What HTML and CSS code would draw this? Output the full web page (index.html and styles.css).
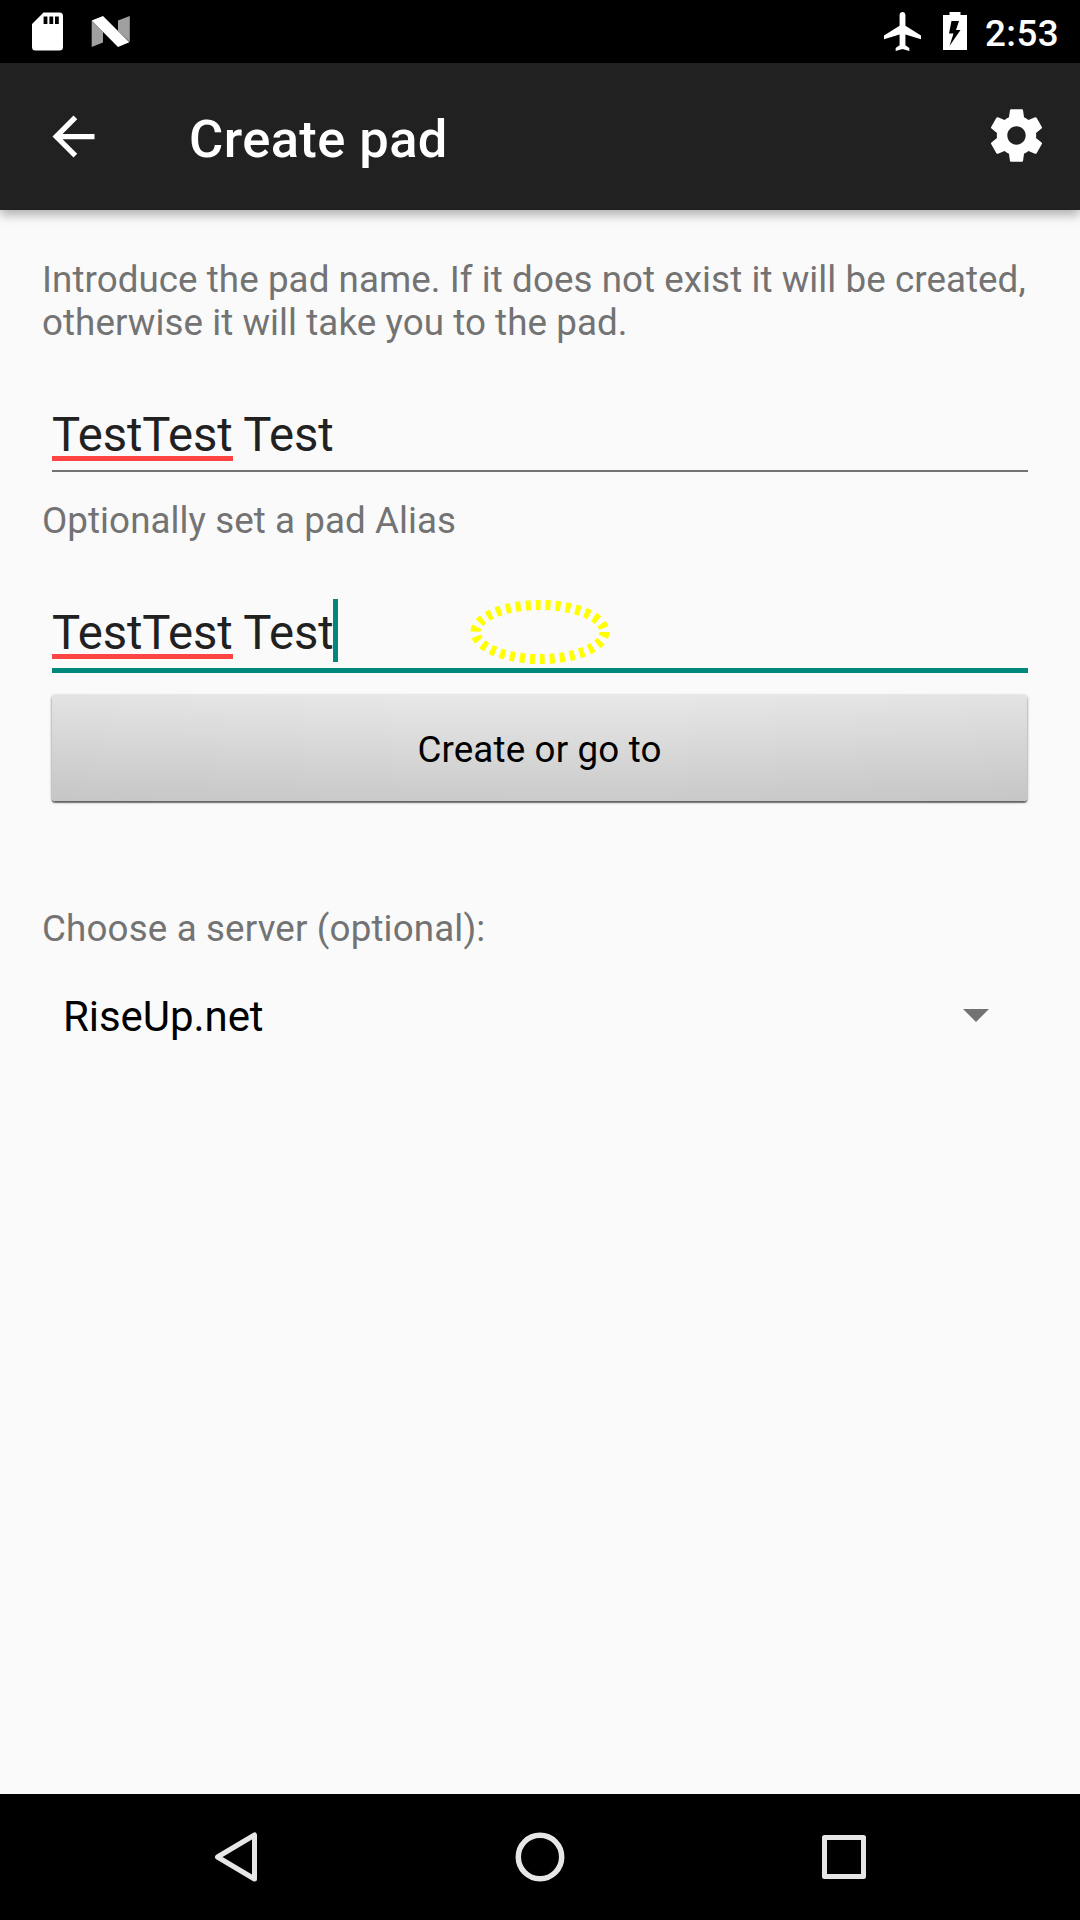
FILE: index.html
```html
<!DOCTYPE html>
<html lang="en">
<head>
<meta charset="utf-8">
<title>Create pad</title>
<link rel="stylesheet" href="styles.css">
</head>
<body>
<div class="screen">
  <header class="status">
    <svg class="status-left" width="140" height="63" viewBox="0 0 140 63">
      <path fill="#fff" fill-rule="evenodd" d="M43.5 12.5H59.5Q63 12.5 63 16V47Q63 50.5 59.5 50.5H35.5Q32 50.5 32 47V24ZM43.6 16.5V24H47.4V16.5ZM49.4 16.5V24H53.2V16.5ZM55 16.5V24H58.8V16.5Z"/>
      <path fill="#a0a0a0" d="M91.7 20.5L103 32V42.5L91.7 47ZM118 20.5L129.8 16V42L118 31Z"/>
      <path fill="#fff" d="M91.7 20.5L103 16L129.3 42.3L118 47Z"/>
    </svg>
    <div class="status-right">
      <svg width="37" height="39" viewBox="2 2 19 20" preserveAspectRatio="none"><path fill="#fff" d="M21 16v-2l-8-5V3.5c0-.83-.67-1.5-1.5-1.5S10 2.67 10 3.5V9l-8 5v2l8-2.5V19l-2 1.5V22l3.5-1 3.5 1v-1.5L13 19v-5.5l8 2.5z"/></svg>
      <svg width="24" height="38" viewBox="0 0 24 38"><path fill="#fff" fill-rule="evenodd" d="M6.5 0H17.5V3H24V38H0V3H6.500ZM8.500 9L6 21.500H10.500L6.500 34L17.500 18H13L16 9Z"/></svg>
      <span class="clock">2:53</span>
    </div>
  </header>

  <div class="appbar">
    <svg width="63" height="63" viewBox="0 0 24 24"><path fill="#fff" d="M20 11H7.830l5.590-5.590L12 4l-8 8 8 8 1.410-1.410L7.830 13H20v-2z"/></svg>
    <h1 class="title">Create pad</h1>
    <svg class="gear" width="63" height="63" viewBox="0 0 24 24"><path fill="#fff" d="M19.430 12.980c.04-.32.07-.64.07-.98s-.03-.66-.07-.98l2.110-1.650c.19-.15.24-.42.12-.64l-2-3.460c-.12-.22-.39-.3-.61-.22l-2.490 1c-.52-.4-1.080-.73-1.690-.98l-.38-2.650C14.460 2.180 14.250 2 14 2h-4c-.25 0-.46.18-.49.42l-.38 2.650c-.61.25-1.170.59-1.690.98l-2.490-1c-.23-.09-.49 0-.61.22l-2 3.460c-.13.22-.07.49.12.64l2.110 1.650c-.04.32-.07.65-.07.98s.03.66.07.98l-2.110 1.650c-.19.15-.24.42-.12.64l2 3.460c.12.22.39.3.61.22l2.490-1c.52.4 1.080.73 1.690.98l.38 2.650c.03.24.24.42.49.42h4c.25 0 .46-.18.49-.42l.38-2.650c.61-.25 1.170-.59 1.690-.98l2.490 1c.23.09.49 0 .61-.22l2-3.460c.12-.22.07-.49-.12-.64l-2.110-1.650zM12 15.500c-1.930 0-3.500-1.570-3.500-3.500s1.570-3.500 3.500-3.500 3.500 1.570 3.500 3.500-1.570 3.500-3.500 3.500z"/></svg>
  </div>

  <main class="content">
    <p class="label intro">Introduce the pad name. If it does not exist it will be created, otherwise it will take you to the pad.</p>
    <div class="field name"><span class="misspelt">TestTest</span> Test</div>
    <p class="label">Optionally set a pad Alias</p>
    <div class="field alias"><span class="misspelt">TestTest</span> Test<i class="caret"></i>
      <svg class="touch" width="140" height="66" viewBox="0 0 140 66"><ellipse cx="70" cy="33" rx="64.500" ry="27" fill="none" stroke="#ff0" stroke-width="10" stroke-dasharray="5 5"/></svg>
    </div>
    <button class="submit">Create or go to</button>
    <p class="label server">Choose a server (optional):</p>
    <div class="spinner"><span>RiseUp.net</span>
      <svg width="26" height="13" viewBox="0 0 26 13"><path fill="#737373" d="M0 0H26L13 13Z"/></svg>
    </div>
  </main>

  <nav class="navbar">
    <svg width="1080" height="126" viewBox="0 0 1080 126" fill="none" stroke="#e6e6e6" stroke-width="5" stroke-linejoin="round">
      <path d="M254.500 41V85L217.500 63Z"/>
      <circle cx="540" cy="63" r="21.700" stroke-width="5.500"/>
      <rect x="824.500" y="43.500" width="39" height="39"/>
    </svg>
  </nav>
</div>
</body>
</html>
```
FILE: styles.css
```css
body {
  margin: 0;
  font-family: Roboto, sans-serif;
}

.screen {
  display: flex;
  flex-direction: column;
  width: 1080px;
  height: 1920px;
  overflow: hidden;
  background: #fafafa;
}

.status {
  display: flex;
  justify-content: space-between;
  height: 63px;
  background: #000;
}

.status-right {
  display: flex;
  align-items: flex-start;
  padding: 12px 21px 0 0;
}

.status-right svg + svg {
  margin-left: 22px;
}

.clock {
  margin: 0 0 0 18px;
  color: #fff;
  font-size: 36.75px;
  font-weight: 500;
  letter-spacing: 0.4px;
  line-height: 43px;
}

.appbar {
  position: relative;
  display: flex;
  align-items: center;
  box-sizing: border-box;
  height: 147px;
  padding: 0 32px 0 42px;
  background: #212121;
  box-shadow: 0 5px 10px rgba(0, 0, 0, 0.3);
}

.title {
  flex: 1;
  margin: 4px 0 0 84px;
  color: #fff;
  font-size: 52.5px;
  font-weight: 500;
  letter-spacing: 0.4px;
  line-height: 62px;
}

.gear {
  margin-bottom: 2px;
}

.content {
  flex: 1;
  padding: 48px 42px 0;
}

.label {
  margin: 0;
  color: #737373;
  font-size: 36.75px;
  letter-spacing: 0.06px;
  line-height: 43px;
}

.intro {
  margin-right: -10px;
}

.field {
  position: relative;
  box-sizing: border-box;
  margin: 0 10px;
  color: #212121;
  font-size: 47.25px;
  letter-spacing: -0.13px;
  line-height: 56px;
  white-space: nowrap;
}

.name {
  height: 65px;
  margin-top: 63px;
  margin-bottom: 27px;
  border-bottom: 2px solid #737373;
}

.alias {
  height: 68px;
  margin-top: 63px;
  border-bottom: 5px solid #00897b;
}

.misspelt {
  display: inline-block;
  height: 49px;
  border-bottom: 5px solid #ff4444;
}

.caret {
  position: absolute;
  left: 281px;
  top: -6px;
  width: 5px;
  height: 63px;
  background: #00897b;
}

.touch {
  position: absolute;
  left: 418px;
  top: -6px;
}

.submit {
  display: block;
  width: 975px;
  height: 106px;
  margin: 22px 10px 0;
  padding: 2px 0 0;
  border: 0;
  border-radius: 3px;
  background:
    linear-gradient(90deg, rgba(0, 0, 0, 0.025), transparent 40%, transparent 60%, rgba(0, 0, 0, 0.025)),
    linear-gradient(#e8e8e8, #cdcdcd 90%, #cbcbcb);
  box-shadow: 0 1px 3px rgba(0, 0, 0, 0.5), 0 2px 1px rgba(0, 0, 0, 0.4);
  color: #000;
  font: 36.75px/43px Roboto, sans-serif;
  letter-spacing: 0.15px;
}

.server {
  margin-top: 106px;
  letter-spacing: 0.14px;
}

.spinner {
  display: flex;
  align-items: center;
  justify-content: space-between;
  margin: 42px 49px 0 21px;
  color: #000;
  font-size: 42px;
  letter-spacing: -0.06px;
  line-height: 49px;
}

.spinner svg {
  margin-bottom: 2px;
}

.navbar {
  height: 126px;
  background: #000;
}

.navbar svg {
  display: block;
}
```
